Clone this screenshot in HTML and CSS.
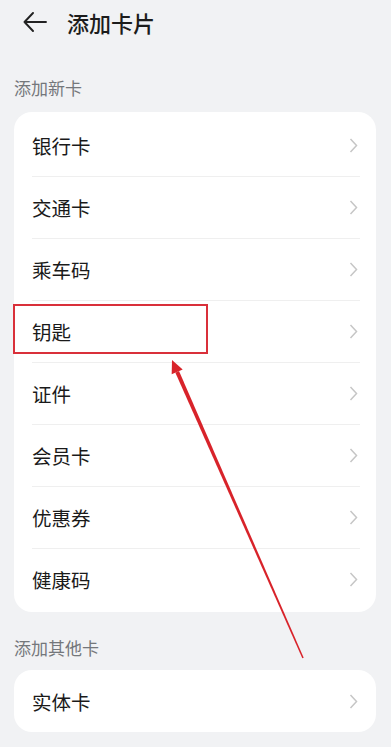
FILE: index.html
```html
<!DOCTYPE html>
<html lang="zh">
<head>
<meta charset="utf-8">
<link rel="stylesheet" href="styles.css">
</head>
<body>
<div class="page">
  <header class="header">
    <svg class="back" width="24" height="20" viewBox="0 0 24 20"><path d="M10 1 L1.5 10 L10 19 M1.5 10 H23" fill="none" stroke="#222" stroke-width="1.9" stroke-linecap="round" stroke-linejoin="round"/></svg>
    <h1 class="title">添加卡片</h1>
  </header>

  <div class="section-label first">添加新卡</div>
  <div class="card list">
    <div class="row"><span>银行卡</span><svg class="chev" width="9" height="15" viewBox="0 0 9 15"><polyline points="1.5,1 7.5,7.5 1.5,14" fill="none" stroke="#c6c6c6" stroke-width="1.5"/></svg></div>
    <div class="row"><span>交通卡</span><svg class="chev" width="9" height="15" viewBox="0 0 9 15"><polyline points="1.5,1 7.5,7.5 1.5,14" fill="none" stroke="#c6c6c6" stroke-width="1.5"/></svg></div>
    <div class="row"><span>乘车码</span><svg class="chev" width="9" height="15" viewBox="0 0 9 15"><polyline points="1.5,1 7.5,7.5 1.5,14" fill="none" stroke="#c6c6c6" stroke-width="1.5"/></svg></div>
    <div class="row"><span>钥匙</span><svg class="chev" width="9" height="15" viewBox="0 0 9 15"><polyline points="1.5,1 7.5,7.5 1.5,14" fill="none" stroke="#c6c6c6" stroke-width="1.5"/></svg></div>
    <div class="row"><span>证件</span><svg class="chev" width="9" height="15" viewBox="0 0 9 15"><polyline points="1.5,1 7.5,7.5 1.5,14" fill="none" stroke="#c6c6c6" stroke-width="1.5"/></svg></div>
    <div class="row"><span>会员卡</span><svg class="chev" width="9" height="15" viewBox="0 0 9 15"><polyline points="1.5,1 7.5,7.5 1.5,14" fill="none" stroke="#c6c6c6" stroke-width="1.5"/></svg></div>
    <div class="row"><span>优惠券</span><svg class="chev" width="9" height="15" viewBox="0 0 9 15"><polyline points="1.5,1 7.5,7.5 1.5,14" fill="none" stroke="#c6c6c6" stroke-width="1.5"/></svg></div>
    <div class="row"><span>健康码</span><svg class="chev" width="9" height="15" viewBox="0 0 9 15"><polyline points="1.5,1 7.5,7.5 1.5,14" fill="none" stroke="#c6c6c6" stroke-width="1.5"/></svg></div>
  </div>

  <div class="section-label second">添加其他卡</div>
  <div class="card single">
    <div class="row"><span>实体卡</span><svg class="chev" width="9" height="15" viewBox="0 0 9 15"><polyline points="1.5,1 7.5,7.5 1.5,14" fill="none" stroke="#c6c6c6" stroke-width="1.5"/></svg></div>
  </div>

  <div class="highlight"></div>
  <svg class="annot" width="391" height="747" viewBox="0 0 391 747">
    <polygon points="172,360 182.7,369.5 171.7,374.3" fill="#d8232a"/>
    <polygon points="179,371.1 175.4,372.7 302.3,658.3 303.7,657.7" fill="#d8232a"/>
  </svg>
</div>
</body>
</html>
```

FILE: styles.css
```css
* { box-sizing: border-box; }
html, body { margin: 0; padding: 0; }
body {
  background: #f1f2f4;
  font-family: "Noto Sans CJK SC", "Noto Sans", sans-serif;
  color: #1a1a1a;
  width: 391px;
  height: 747px;
  overflow: hidden;
}
.page { position: relative; width: 391px; height: 747px; }
.header {
  height: 44px;
  display: flex;
  align-items: center;
  padding-left: 23px;
  gap: 20px;
}
.back { display: block; }
.title {
  margin: 0;
  font-size: 22px;
  font-weight: 500;
  line-height: 28px;
  color: #1c1c1c;
}
.section-label {
  padding-left: 14px;
  font-size: 17px;
  line-height: 24px;
  color: #74777b;
}
.section-label.first { margin-top: 32px; }
.section-label.second { margin-top: 24px; }
.card {
  background: #fff;
  border-radius: 18px;
  margin: 12px 15px 0 14px;
}
.card.list { padding: 2px 0; }
.card.single { margin-top: 10px; }
.row {
  position: relative;
  height: 62px;
  display: flex;
  align-items: center;
  justify-content: space-between;
  padding: 1px 18px 0 18px;
  font-size: 19.5px;
  color: #1a1a1a;
}
.row + .row::before {
  content: "";
  position: absolute;
  left: 18px;
  right: 16px;
  top: 0;
  height: 1px;
  background: #efefef;
}
.chev { display: block; }
.highlight {
  position: absolute;
  left: 13px;
  top: 304px;
  width: 195px;
  height: 50px;
  border: 2px solid #d9303a;
}
.annot {
  position: absolute;
  left: 0;
  top: 0;
  pointer-events: none;
}
```
